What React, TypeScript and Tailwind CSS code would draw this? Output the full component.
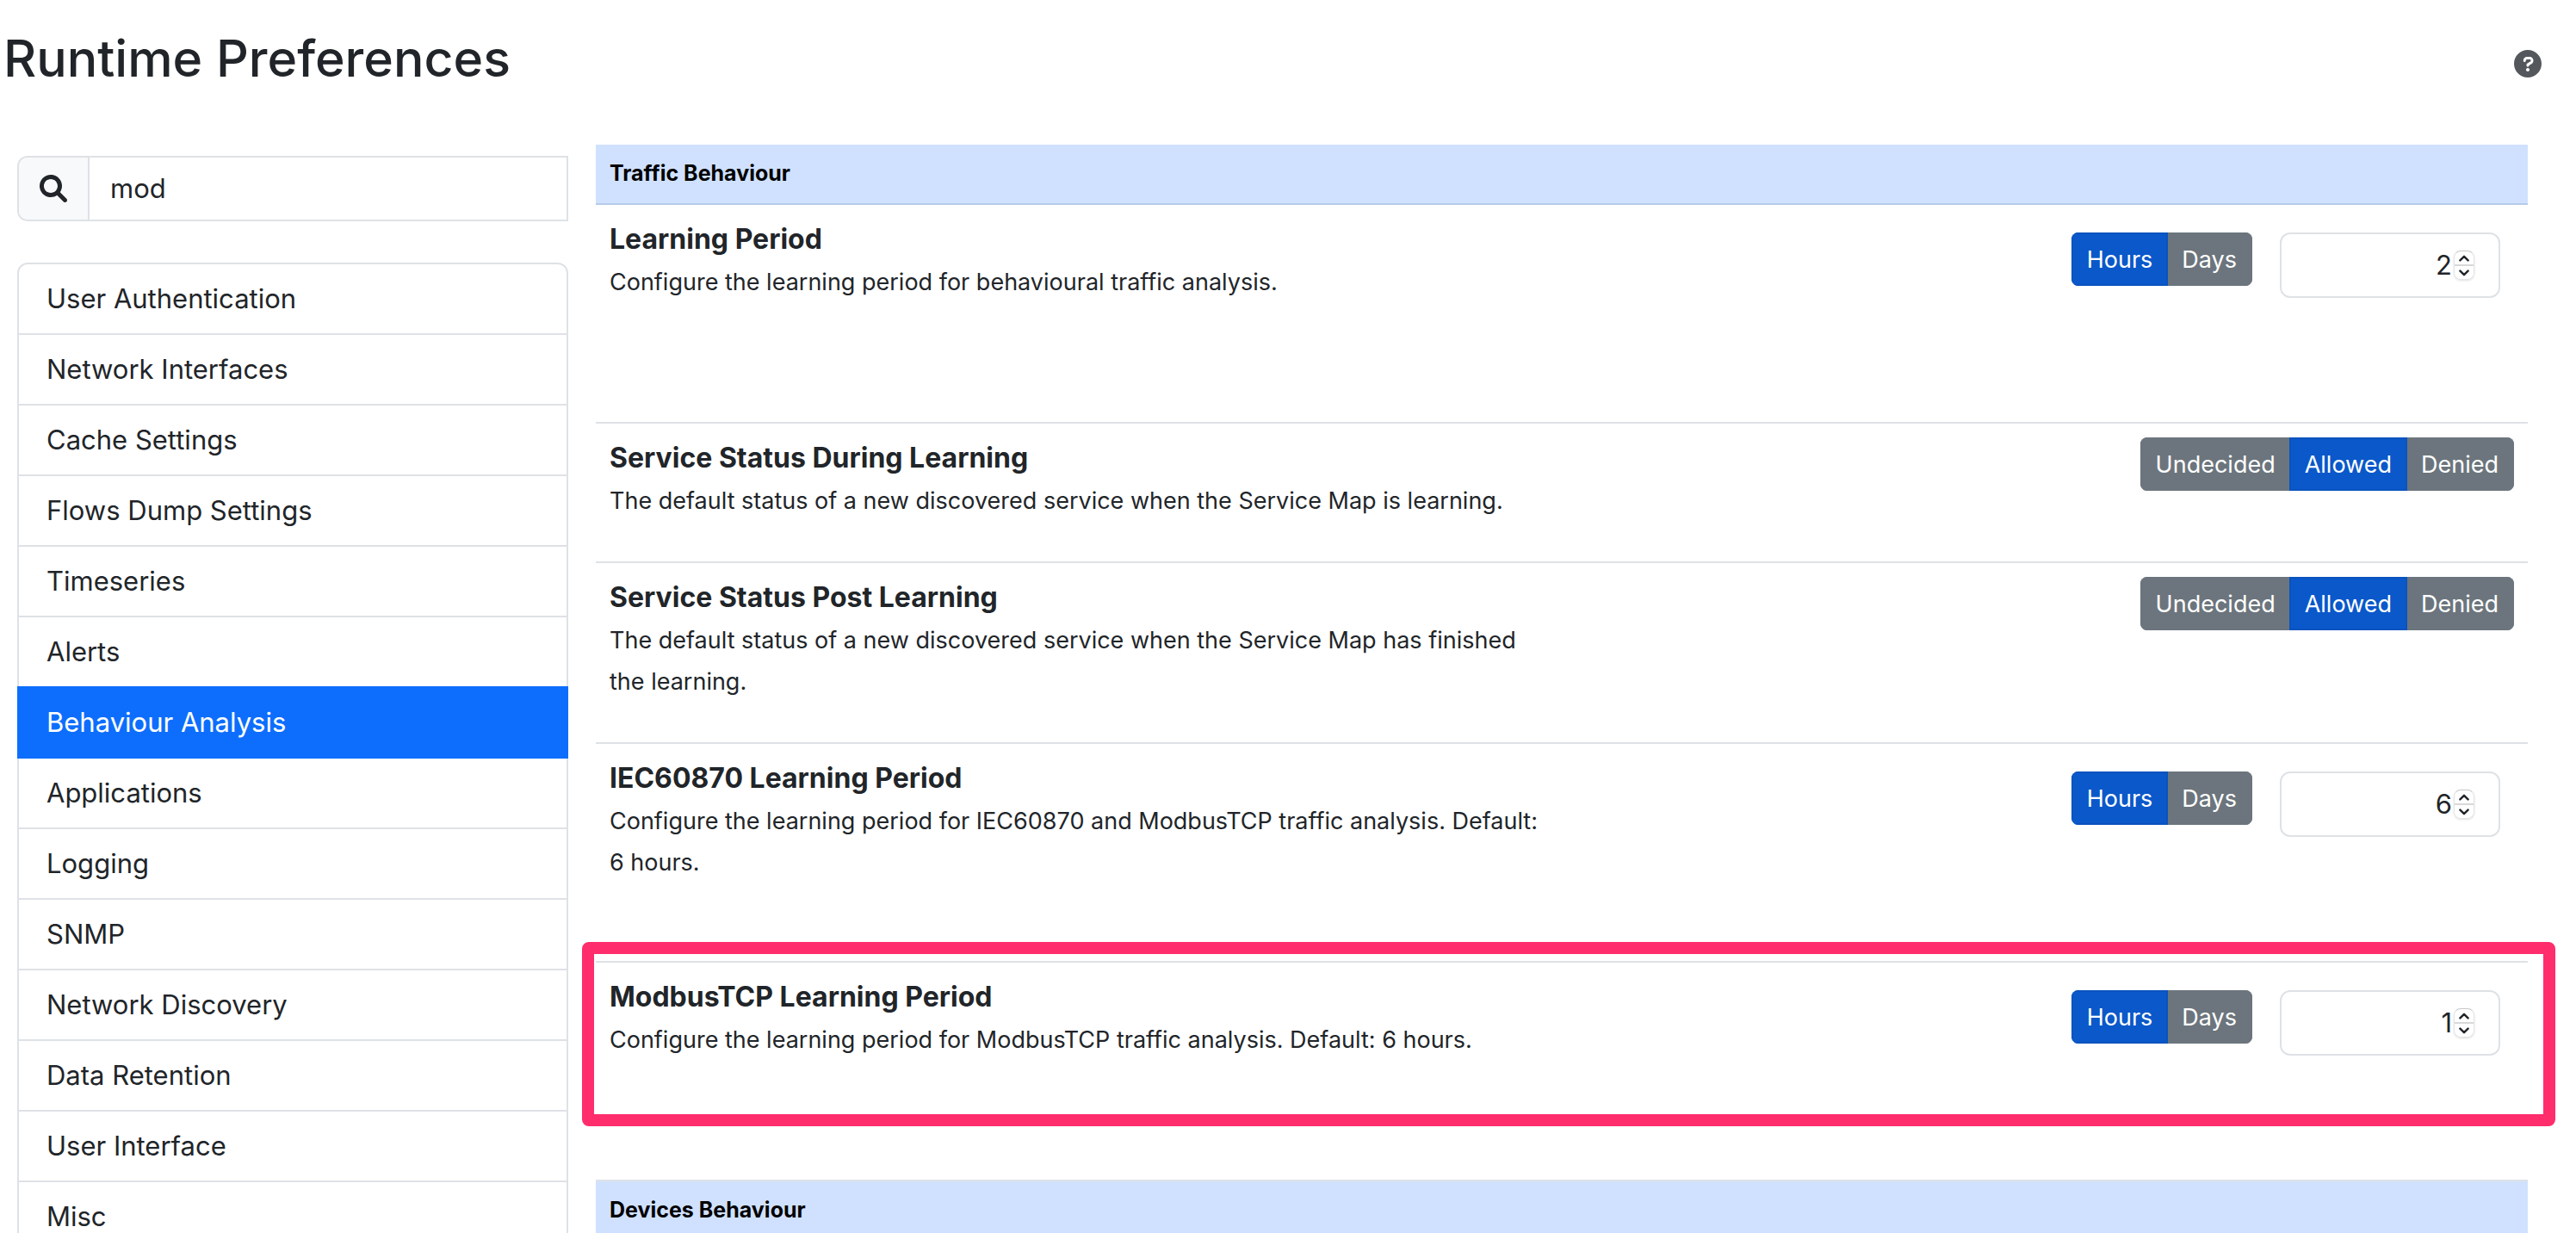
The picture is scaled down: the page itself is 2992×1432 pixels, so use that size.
import { useState } from "react";

const sections = [
  "User Authentication",
  "Network Interfaces",
  "Cache Settings",
  "Flows Dump Settings",
  "Timeseries",
  "Alerts",
  "Behaviour Analysis",
  "Applications",
  "Logging",
  "SNMP",
  "Network Discovery",
  "Data Retention",
  "User Interface",
  "Misc",
];

function SearchIcon() {
  return (
    <svg viewBox="0 0 512 512" className="size-8" fill="currentColor" role="img" aria-label="Search">
      <path d="M500.3 443.7l-119.7-119.7c27.22-40.41 40.65-90.9 33.46-144.7C401.8 87.79 326.8 13.32 235.2 1.723C99.01-15.51-15.51 99.01 1.724 235.2c11.6 91.64 86.08 166.7 177.6 178.9c53.8 7.189 104.3-6.236 144.7-33.46l119.7 119.7c15.62 15.62 40.95 15.62 56.57 0C515.9 484.7 515.9 459.3 500.3 443.7zM79.1 208c0-70.58 57.42-128 128-128s128 57.42 128 128c0 70.58-57.42 128-128 128S79.1 278.6 79.1 208z" />
    </svg>
  );
}

function HelpIcon() {
  return (
    <svg viewBox="0 0 512 512" className="size-8" fill="currentColor" aria-hidden="true">
      <path d="M256 0C114.6 0 0 114.6 0 256s114.6 256 256 256s256-114.6 256-256S397.4 0 256 0zM256 400c-18 0-32-14-32-32s13.1-32 32-32c17.1 0 32 14 32 32S273.1 400 256 400zM325.1 258L280 286V288c0 13-11 24-24 24S232 301 232 288V272c0-8 4-16 12-21l57-34C308 213 314 206 314 198C314 186 303.1 176 291.1 176h-49.1C229.1 176 220 186 220 198c0 13-11 24-24 24s-24-11-24-24C172 159 203 128 241.1 128h49.1C329 128 360 159 360 198C360 222 347 245 325.1 258z" />
    </svg>
  );
}

function ToggleGroup({ label, options, initial }: { label: string; options: string[]; initial: string }) {
  const [value, setValue] = useState(initial);
  return (
    <div role="group" aria-label={label} className="flex overflow-hidden rounded-lg">
      {options.map((option) => (
        <button
          key={option}
          type="button"
          aria-pressed={option === value}
          onClick={() => setValue(option)}
          className={
            option === value
              ? "relative -ml-0.5 h-[62px] border-2 border-[#0a53be] bg-[#0a58ca] px-4 pt-0.5 text-[27px] leading-[42px] text-white first:ml-0"
              : "-ml-0.5 h-[62px] border-2 border-[#6c757d] bg-[#6c757d] px-4 pt-0.5 text-[27px] leading-[42px] text-white first:ml-0"
          }
        >
          {option}
        </button>
      ))}
    </div>
  );
}

function NumberField({ label, initial }: { label: string; initial: number }) {
  const [value, setValue] = useState(initial);
  return (
    <div className="flex h-[76px] w-64 items-center rounded-xl border-2 border-[#dee2e6] bg-white pr-7 focus-within:border-[#86b7fe]">
      <input
        type="number"
        aria-label={label}
        value={value}
        onChange={(e) => setValue(Number(e.target.value))}
        className="min-w-0 flex-1 bg-transparent pr-0.5 text-right text-[31px] leading-[48px] outline-none [&::-webkit-inner-spin-button]:appearance-none"
      />
      <span className="flex h-[34px] w-6 flex-col overflow-hidden rounded-lg border border-[#e4e4e4] border-t-[#c8c8c8] shadow-sm">
        <button
          type="button"
          aria-label="Increase"
          onClick={() => setValue(value + 1)}
          className="flex flex-1 items-center justify-center border-b-2 border-[#d8d8d8]"
        >
          <svg viewBox="0 0 12 8" className="h-2 w-3" fill="none" stroke="#212529" strokeWidth="2.4" strokeLinecap="round" strokeLinejoin="round">
            <path d="M1.4 6.4 6 1.8l4.6 4.6" />
          </svg>
        </button>
        <button type="button" aria-label="Decrease" onClick={() => setValue(value - 1)} className="flex flex-1 items-center justify-center">
          <svg viewBox="0 0 12 8" className="h-2 w-3" fill="none" stroke="#212529" strokeWidth="2.4" strokeLinecap="round" strokeLinejoin="round">
            <path d="M1.4 1.6 6 6.2l4.6-4.6" />
          </svg>
        </button>
      </span>
    </div>
  );
}

type Preference = {
  title: string;
  text: string;
  hours?: number;
  highlighted?: boolean;
};

const preferences: Preference[] = [
  { title: "Learning Period", text: "Configure the learning period for behavioural traffic analysis.", hours: 2 },
  {
    title: "Service Status During Learning",
    text: "The default status of a new discovered service when the Service Map is learning.",
  },
  {
    title: "Service Status Post Learning",
    text: "The default status of a new discovered service when the Service Map has finished the learning.",
  },
  {
    title: "IEC60870 Learning Period",
    text: "Configure the learning period for IEC60870 and ModbusTCP traffic analysis. Default: 6 hours.",
    hours: 6,
  },
  {
    title: "ModbusTCP Learning Period",
    text: "Configure the learning period for ModbusTCP traffic analysis. Default: 6 hours.",
    hours: 1,
    highlighted: true,
  },
];

function PreferenceRow({ title, text, hours, highlighted }: Preference) {
  return (
    <tr className={hours !== undefined ? "relative h-[254px]" : "relative"}>
      <td className="w-1/2 border-b-2 border-[#dee2e6] p-4 align-top">
        <div className="mb-0.5 text-[32px] leading-[48px] font-bold">{title}</div>
        <p className="mb-[30px] text-[27px] leading-[48px]">{text}</p>
        {highlighted && (
          <div className="pointer-events-none absolute -top-6 -right-8 bottom-16 -left-4 rounded-lg border-[14px] border-[#ff2d6c]" />
        )}
      </td>
      <td className="w-1/2 border-b-2 border-[#dee2e6] p-4 align-top">
        {hours !== undefined ? (
          <div className="flex items-start justify-end gap-8 pt-4 pr-4">
            <ToggleGroup label={title + " unit"} options={["Hours", "Days"]} initial="Hours" />
            <NumberField label={title} initial={hours} />
          </div>
        ) : (
          <div className="flex justify-end">
            <ToggleGroup label={title} options={["Undecided", "Allowed", "Denied"]} initial="Allowed" />
          </div>
        )}
      </td>
    </tr>
  );
}

function SectionHeader({ children }: { children: string }) {
  return (
    <thead>
      <tr>
        <th
          colSpan={2}
          scope="colgroup"
          className="h-[70px] border-b-2 border-[#b6cbe9] bg-[#d0e1ff] px-4 pb-0.5 text-left text-[25px] leading-[36px] font-bold text-black"
        >
          {children}
        </th>
      </tr>
    </thead>
  );
}

export default function App() {
  const [query, setQuery] = useState("mod");
  const [active, setActive] = useState("Behaviour Analysis");
  return (
    <div className="h-screen overflow-hidden bg-white font-['Inter',sans-serif] text-[#212529]">
      <header className="flex items-center justify-between pt-[30px] pr-10 pl-1">
        <h1 className="text-[59px] leading-[76px] font-medium">Runtime Preferences</h1>
        <a href="#help" aria-label="Help" className="mt-3 text-[#54585c]">
          <HelpIcon />
        </a>
      </header>
      <div className="flex items-start gap-8 pt-[62px] pr-14 pl-5">
        <aside className="mt-[13px] w-[640px] shrink-0">
          <div className="flex h-[76px] overflow-hidden rounded-l-xl border-2 border-[#dee2e6]">
            <label htmlFor="search" className="flex w-[82px] items-center justify-center border-r-2 border-[#dee2e6] bg-[#f8f9fa]">
              <SearchIcon />
            </label>
            <input
              id="search"
              type="text"
              value={query}
              onChange={(e) => setQuery(e.target.value)}
              className="min-w-0 flex-1 px-6 text-[31px] leading-[48px] outline-none"
            />
          </div>
          <nav className="mt-12 rounded-xl border-2 border-[#dee2e6]">
            {sections.map((name) => (
              <a
                key={name}
                href="#section"
                onClick={() => setActive(name)}
                className={
                  name === active
                    ? "relative -mx-0.5 -mt-0.5 block h-[84px] bg-[#0d6efd] px-[34px] pt-[18px] text-[31px] leading-[48px] text-white"
                    : "block h-[82px] border-b-2 border-[#dee2e6] px-8 py-4 text-[31px] leading-[48px] last:border-b-0"
                }
              >
                {name}
              </a>
            ))}
          </nav>
        </aside>
        <main className="min-w-0 flex-1">
          <table className="w-full table-fixed border-separate border-spacing-0">
            <SectionHeader>Traffic Behaviour</SectionHeader>
            <tbody>
              {preferences.map((p) => (
                <PreferenceRow key={p.title} {...p} />
              ))}
            </tbody>
          </table>
          <table className="w-full table-fixed border-separate border-spacing-0">
            <SectionHeader>Devices Behaviour</SectionHeader>
          </table>
        </main>
      </div>
    </div>
  );
}
